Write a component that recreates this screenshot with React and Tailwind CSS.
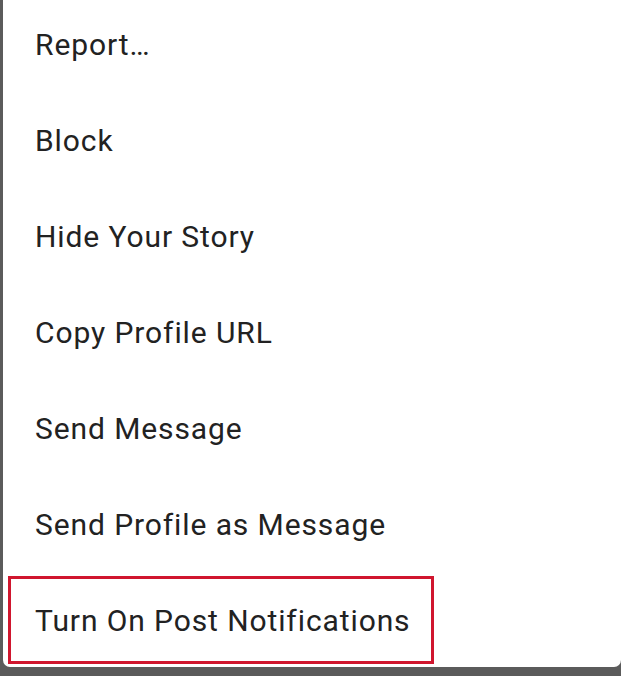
const items = [
  'Report…',
  'Block',
  'Hide Your Story',
  'Copy Profile URL',
  'Send Message',
  'Send Profile as Message',
]

export default function App() {
  return (
    <div className="w-[621px] h-[676px] bg-[#5b5b5b] pl-[3px] overflow-hidden">
      <div
        className="w-full h-[667px] bg-white rounded-b-[7px] flex flex-col"
        style={{ fontFamily: 'Roboto, "Liberation Sans", sans-serif' }}
      >
        <div className="-mt-[4px]">
          {items.map((label) => (
            <div key={label} className="h-24 flex items-center pl-[32px] text-[30px] tracking-[0.9px] text-[#222222]">
              {label}
            </div>
          ))}
          <div className="h-24 flex items-center pl-[5px]">
            <div className="w-[426px] h-[88px] border-[3px] border-[#d0162e] flex items-center pl-[24px] text-[30px] tracking-[0.9px] text-[#222222]">
              Turn On Post Notifications
            </div>
          </div>
        </div>
      </div>
    </div>
  )
}
